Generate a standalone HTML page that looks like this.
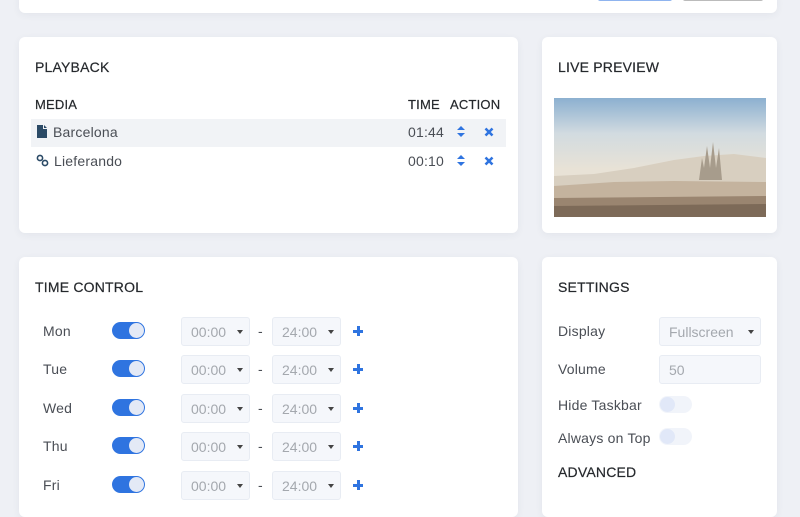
<!DOCTYPE html>
<html><head><style>
*{box-sizing:border-box;margin:0;padding:0}
body{width:800px;height:500px;overflow:hidden;background:#eef0f5;font-family:"Liberation Sans",sans-serif;color:#3a3f47;position:relative}
.card{position:absolute;background:#fff;border-radius:6px;box-shadow:0 2px 8px rgba(50,60,90,.06)}
.h{position:absolute;font-size:14px;color:#25282c;letter-spacing:.2px;-webkit-text-stroke:.2px #25282c}
.t{position:absolute;font-size:14px;color:#4a4e55;letter-spacing:.2px}
.sel{position:absolute;width:69px;height:29px;background:#f5f7fb;border:1px solid #e8ecf3;border-radius:3px;font-size:14px;color:#a4a8ae;padding:6px 0 0 9px}
.sel:after{content:"";position:absolute;right:6px;top:12px;border:3px solid transparent;border-top:4px solid #444;border-bottom:0}
.sel.n:after{display:none}
.tog{position:absolute;width:33px;height:17px;border-radius:9px;background:#2f74e0}
.tog:after{content:"";position:absolute;right:1px;top:1px;width:15px;height:15px;border-radius:50%;background:#e3e9f6}
.togo{position:absolute;width:33px;height:17px;border-radius:9px;background:#f1f4fa}
.togo:after{content:"";position:absolute;left:1px;top:1px;width:15px;height:15px;border-radius:50%;background:#e1e8f8}
.plus{position:absolute;width:10px;height:10px}
.plus:before{content:"";position:absolute;left:0;top:4px;width:10px;height:2.5px;background:#2f74e0}
.plus:after{content:"";position:absolute;left:4px;top:0;width:2.5px;height:10px;background:#2f74e0}
</style></head><body>
<div class="card" style="left:19px;top:-10px;width:758px;height:23px"></div>
<div style="position:absolute;left:598px;top:-3px;width:74px;height:4px;background:#8fb4ef;border-radius:2px"></div>
<div style="position:absolute;left:683px;top:-3px;width:80px;height:4px;background:#bbb;border-radius:2px"></div>

<div class="card" style="left:19px;top:37px;width:499px;height:196px"></div>
<div class="h" style="left:35px;top:59px">PLAYBACK</div>
<div class="h" style="left:35px;top:97px;font-size:13px">MEDIA</div>
<div class="h" style="left:408px;top:97px;font-size:13px">TIME</div>
<div class="h" style="left:450px;top:97px;font-size:13px">ACTION</div>
<div style="position:absolute;left:31px;top:119px;width:475px;height:28px;background:#f1f3f6"></div>
<svg style="position:absolute;left:37px;top:125px" width="10" height="13" viewBox="0 0 10 13"><path d="M0 0H6V4H10V13H0Z M7 0L10 3H7Z" fill="#2b4a66"/></svg>
<div class="t" style="left:53px;top:124px">Barcelona</div>
<div class="t" style="left:408px;top:124px">01:44</div>
<svg style="position:absolute;left:456px;top:125px" width="10" height="13" viewBox="0 0 10 13"><path d="M1 5L5 1L9 5Z M1 8L5 12L9 8Z" fill="#2f74e0"/></svg>
<svg style="position:absolute;left:484px;top:127px" width="10" height="10" viewBox="0 0 10 10"><path d="M1.5 1.5L8.5 8.5M8.5 1.5L1.5 8.5" stroke="#2f74e0" stroke-width="2.6"/></svg>
<svg style="position:absolute;left:36px;top:154px" width="13" height="13" viewBox="0 0 13 13"><circle cx="4" cy="4" r="2.6" fill="none" stroke="#2b4a66" stroke-width="1.6"/><circle cx="9" cy="9" r="2.6" fill="none" stroke="#2b4a66" stroke-width="1.6"/></svg>
<div class="t" style="left:54px;top:153px">Lieferando</div>
<div class="t" style="left:408px;top:153px">00:10</div>
<svg style="position:absolute;left:456px;top:154px" width="10" height="13" viewBox="0 0 10 13"><path d="M1 5L5 1L9 5Z M1 8L5 12L9 8Z" fill="#2f74e0"/></svg>
<svg style="position:absolute;left:484px;top:156px" width="10" height="10" viewBox="0 0 10 10"><path d="M1.5 1.5L8.5 8.5M8.5 1.5L1.5 8.5" stroke="#2f74e0" stroke-width="2.6"/></svg>

<div class="card" style="left:542px;top:37px;width:235px;height:196px"></div>
<div class="h" style="left:558px;top:59px">LIVE PREVIEW</div>
<svg style="position:absolute;left:554px;top:98px" width="212" height="119" viewBox="0 0 212 119">
<defs><linearGradient id="s" x1="0" y1="0" x2="0" y2="1"><stop offset="0" stop-color="#8cb0d0"/><stop offset=".3" stop-color="#d2dbe0"/><stop offset=".6" stop-color="#e8e2d6"/></linearGradient></defs>
<rect width="212" height="119" fill="url(#s)"/>
<path d="M0 78 L40 76 L80 70 L120 62 L150 58 L180 56 L212 60 L212 90 L0 90Z" fill="#d8cfc0"/>
<path d="M145 82 L148 60 L150 70 L153 48 L156 70 L159 44 L162 70 L165 50 L168 82 Z" fill="#a79c8c"/>
<path d="M0 88 L60 84 L120 83 L212 84 L212 119 L0 119Z" fill="#c4b39e"/>
<path d="M0 100 L212 98 L212 119 L0 119Z" fill="#9a8570"/>
<path d="M0 108 L212 106 L212 119 L0 119Z" fill="#7d6a58"/>
</svg>

<div class="card" style="left:19px;top:257px;width:499px;height:260px"></div>
<div class="h" style="left:35px;top:279px">TIME CONTROL</div>

<div class="card" style="left:542px;top:257px;width:235px;height:260px"></div>
<div class="h" style="left:558px;top:279px">SETTINGS</div>
<div class="t" style="left:558px;top:323px">Display</div>
<div class="sel" style="left:659px;top:317px;width:102px">Fullscreen</div>
<div class="t" style="left:558px;top:361px">Volume</div>
<div class="sel n" style="left:659px;top:355px;width:102px">50</div>
<div class="t" style="left:558px;top:397px">Hide Taskbar</div>
<div class="togo" style="left:659px;top:396px"></div>
<div class="t" style="left:558px;top:430px">Always on Top</div>
<div class="togo" style="left:659px;top:428px"></div>
<div class="h" style="left:558px;top:464px">ADVANCED</div>

<div class="t" style="left:43px;top:323px">Mon</div>
<div class="t" style="left:43px;top:361px">Tue</div>
<div class="t" style="left:43px;top:400px">Wed</div>
<div class="t" style="left:43px;top:438px">Thu</div>
<div class="t" style="left:43px;top:477px">Fri</div>
<div class="tog" style="left:112px;top:322px"></div>
<div class="tog" style="left:112px;top:360px"></div>
<div class="tog" style="left:112px;top:399px"></div>
<div class="tog" style="left:112px;top:437px"></div>
<div class="tog" style="left:112px;top:476px"></div>
<div class="sel" style="left:181px;top:317px">00:00</div><div class="t" style="left:258px;top:323px">-</div><div class="sel" style="left:272px;top:317px">24:00</div><div class="plus" style="left:353px;top:326px"></div>
<div class="sel" style="left:181px;top:355px">00:00</div><div class="t" style="left:258px;top:361px">-</div><div class="sel" style="left:272px;top:355px">24:00</div><div class="plus" style="left:353px;top:364px"></div>
<div class="sel" style="left:181px;top:394px">00:00</div><div class="t" style="left:258px;top:400px">-</div><div class="sel" style="left:272px;top:394px">24:00</div><div class="plus" style="left:353px;top:403px"></div>
<div class="sel" style="left:181px;top:432px">00:00</div><div class="t" style="left:258px;top:438px">-</div><div class="sel" style="left:272px;top:432px">24:00</div><div class="plus" style="left:353px;top:441px"></div>
<div class="sel" style="left:181px;top:471px">00:00</div><div class="t" style="left:258px;top:477px">-</div><div class="sel" style="left:272px;top:471px">24:00</div><div class="plus" style="left:353px;top:480px"></div>
</body></html>
